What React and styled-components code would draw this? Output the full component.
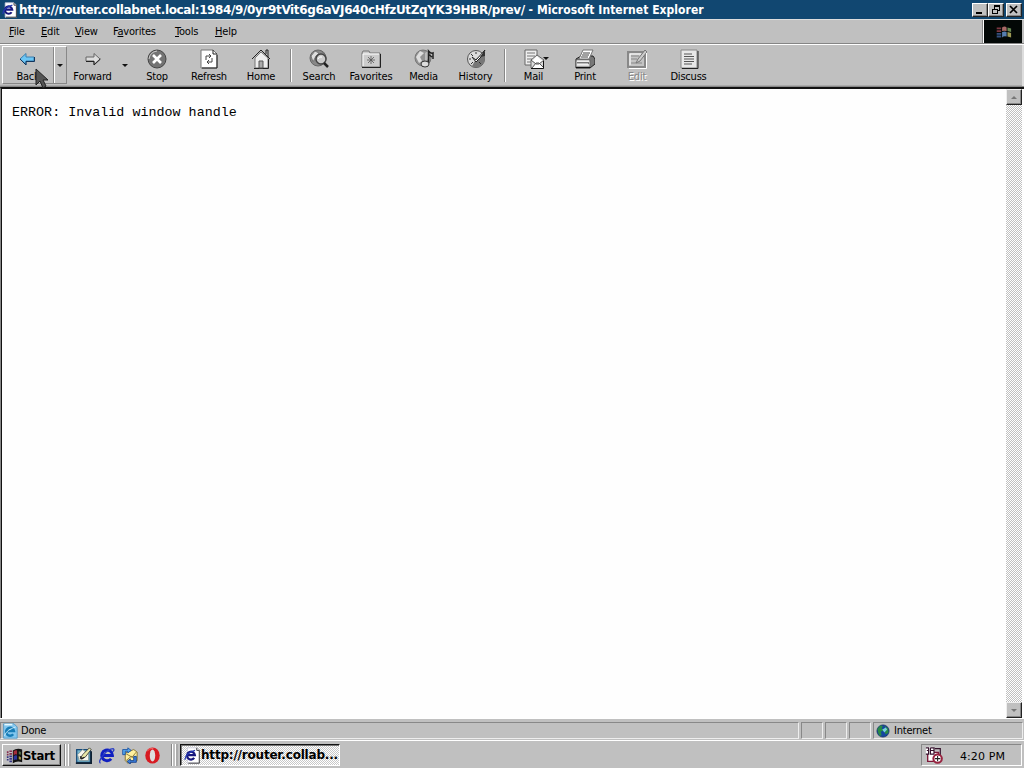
import styled, { createGlobalStyle } from "styled-components";

const GlobalStyle = createGlobalStyle`
  * { box-sizing: border-box; }
  body { margin: 0; overflow: hidden; background: #c0c0c0; }
`;

const tools = [
  { label: "Stop", icon: "stop", width: 50 },
  { label: "Refresh", icon: "refresh", width: 54 },
  { label: "Home", icon: "home", width: 50 },
];

const searchTools = [
  { label: "Search", icon: "search", width: 52 },
  { label: "Favorites", icon: "favorites", width: 52 },
  { label: "Media", icon: "media", width: 53 },
  { label: "History", icon: "history", width: 51 },
];

const pageTools = [
  { label: "Print", icon: "print", width: 52 },
  { label: "Edit", icon: "edit", width: 52, disabled: true },
  { label: "Discuss", icon: "discuss", width: 51 },
];

const menus = [
  ["F", "ile", "", 32],
  ["E", "dit", "", 34],
  ["V", "iew", "", 38],
  ["a", "vorites", "F", 62],
  ["T", "ools", "", 40],
  ["H", "elp", "", 36],
];

const art = {
  back: (
    <>
      <path d="M2 10L8 4.5V8H16V12H8V15.5Z" fill="#6cc6f4" stroke="#3d7fae" />
      <path d="M2 10L8 16V12.5H16.5V8" fill="none" stroke="#12365e" />
    </>
  ),
  forward: (
    <>
      <path d="M17 10L11 4.5V8H3V12H11V15.5Z" fill="#ddd" stroke="#666" />
      <path d="M3 12.5H11V16L17.5 10" fill="none" stroke="#222" />
    </>
  ),
  stop: (
    <>
      <circle cx="10" cy="10" r="9" fill="#737373" stroke="#444" />
      <path d="M2 10Q3 3 10 2" stroke="#ccc" fill="none" />
      <path d="M6 6L14 14M14 6L6 14" stroke="#fff" strokeWidth="2.6" />
    </>
  ),
  refresh: (
    <>
      <path d="M2 1H14L18 5V19H2Z" fill="#fff" stroke="#777" />
      <path d="M14 1V5H18M18 6V19H3" fill="none" stroke="#222" />
      <path d="M7 11V7H12M10 5L12 7L10 9M13 9V13H8M10 11L8 13L10 15" fill="none" stroke="#444" />
    </>
  ),
  home: (
    <>
      <path d="M4 9V19H17V9L10 3Z" fill="#eee" stroke="#777" />
      <path d="M1 10L10 1L19 10M15 5V1H17V8M17.5 10V19.5H3" fill="none" stroke="#222" />
      <path d="M8 12H12V19H8Z" fill="#aaa" stroke="#555" />
    </>
  ),
  search: (
    <>
      <circle cx="9" cy="9" r="8" fill="#888" stroke="#666" />
      <path d="M2 7L6 2L10 4L7 7L4 13ZM12 2L16 6" fill="#ddd" stroke="#777" />
      <circle cx="12" cy="10" r="5" fill="#ccc" stroke="#444" strokeWidth="1.5" />
      <path d="M9 10Q10 7 13 8" fill="none" stroke="#fff" />
      <path d="M15 14L19 18" stroke="#222" strokeWidth="2.5" />
    </>
  ),
  favorites: (
    <>
      <path d="M1 4L2 2H8L9 4H19V18H1Z" fill="#ccc" stroke="#777" />
      <path d="M2 17V5H18" fill="none" stroke="#fff" />
      <path d="M19.5 5V18.5H1" fill="none" stroke="#222" />
      <path d="M10 7V15M6 11H14M7 8L13 14M13 8L7 14" stroke="#555" strokeWidth=".8" />
    </>
  ),
  media: (
    <>
      <circle cx="9" cy="9" r="8" fill="#929292" stroke="#777" />
      <path d="M2 8L6 2L10 4L6 8L8 12L5 14Z" fill="#ddd" />
      <path d="M11 4L14 2V10L11 13Z" fill="#bbb" />
      <path d="M14.5 14V2Q17 5 19 4V10M14 5L18 8" fill="none" stroke="#222" strokeWidth="1.5" />
      <ellipse cx="11" cy="15" rx="4" ry="3" fill="#ddd" stroke="#333" />
    </>
  ),
  history: (
    <>
      <circle cx="10" cy="10" r="8.5" fill="#ddd" stroke="#555" />
      <path d="M10 10L18 4Q21 11 15 17Q10 20 6 17Z" fill="#777" />
      <path d="M3 10H5M10 3V5M5 5L7 7M5 15L7 13M15 15L13 13" stroke="#333" />
      <path d="M6 8L10 11L19 1L15 8L10 13Z" fill="#fff" stroke="#222" />
      <path d="M14 8L19 2V7Z" fill="#333" />
    </>
  ),
  mail: (
    <>
      <path d="M1 1H13V16H1Z" fill="#eee" stroke="#666" />
      <path d="M3 4H11M3 7H11M3 10H8M3 13H7" stroke="#777" />
      <path d="M7 11L13 6L20 11V19H7Z" fill="#ddd" stroke="#666" />
      <path d="M9 11L13 7L17 11L15 14H11Z" fill="#fff" />
      <path d="M8 19L12 14H15L20 19M7 11L12 15H15L20 11" fill="#fff" stroke="#555" />
      <path d="M19.5 12V19.5H7" fill="none" stroke="#111" />
    </>
  ),
  print: (
    <>
      <path d="M1 10L6 7H18L20 10V15L15 19H1Z" fill="#777" stroke="#222" />
      <path d="M4 10L8 1H18L14 10Z" fill="#fff" stroke="#777" />
      <path d="M8 4H15M7 6H14M6 8H13" stroke="#444" />
      <path d="M1 11H15V18H1Z" fill="#ddd" stroke="#666" />
      <path d="M2 14H14M1 18.5H15" stroke="#111" />
      <path d="M2 15H13M2 12H14" stroke="#fff" />
    </>
  ),
  edit: (
    <>
      <path d="M1 3H18V18H1Z" fill="#c4c4c4" stroke="#888" strokeWidth="2" />
      <path d="M4 7H12M4 10H10M4 14H15" stroke="#888" />
      <path d="M9 14L11 10L18 1L20 3L13 12Z" fill="#ccc" stroke="#777" />
      <path d="M2 19.5H19.5V4M3 16V5H14" fill="none" stroke="#fff" />
    </>
  ),
  discuss: (
    <>
      <path d="M2 1H18V19H2Z" fill="#e8e8e8" stroke="#888" />
      <path d="M19 2V19.5H3" fill="none" stroke="#222" />
      <path d="M5 5H13M5 7.5H15M5 10H15M5 12.5H15M5 15H13" stroke="#555" />
    </>
  ),
  ie: (
    <>
      <path d="M4 1H15L18 4V19H4Z" fill="#fff" stroke="#ccd" />
      <path d="M15 1V4H18V19H5" fill="none" stroke="#222" />
      <path d="M12 12.8A4.6 4.6 0 1 1 12.8 9.5H5" fill="none" stroke="#17177d" strokeWidth="2.6" />
      <path d="M1 15Q2 7 13 4" fill="none" stroke="#2338b0" strokeWidth="1.5" />
    </>
  ),
  browser: (
    <>
      <path d="M15.5 14A6.3 6.3 0 1 1 17 10H5" fill="none" stroke="#101fc0" strokeWidth="3.5" />
      <path d="M3 19Q0 18 5 11Q12 2 18 2Q20 3 17 6" fill="none" stroke="#263ac4" strokeWidth="1.5" />
    </>
  ),
  page: (
    <>
      <path d="M2 1H15L19 5V19H2Z" fill="#83c7ef" stroke="#4a91be" />
      <path d="M3 2H13" stroke="#e6faff" strokeWidth="2" />
      <path d="M14 14A5 5 0 1 1 15 10H6" fill="none" stroke="#187db7" strokeWidth="3" />
      <path d="M3 16Q6 8 17 5" fill="none" stroke="#e2f7ff" />
    </>
  ),
  windows: (
    <>
      <path d="M8 4Q13 1 19 3V18Q13 16 8 19Z" fill="#111" />
      <path d="M9 5Q11 3.5 13 4V9Q11 8 9 10Z" fill="#a42c3b" />
      <path d="M15 5Q16 5 17.5 6V9Q16 8.5 15 8.5Z" fill="#51724b" />
      <path d="M9 11Q11 9 13 10V15Q11 14 9 16Z" fill="#2b369d" />
      <path d="M15 11Q16 11 17.5 12V15Q16 14.5 15 14.5Z" fill="#aa9940" />
      <path d="M1 6H3M4 5H7M1 9H3M4 8H7" stroke="#85304f" strokeWidth="2" />
      <path d="M1 12H3M4 11H7M1 15H3M4 14H7M4 17H7" stroke="#353484" strokeWidth="2" />
    </>
  ),
  desktop: (
    <>
      <path d="M2 3H18V18H2Z" fill="#79b8d1" stroke="#174b79" strokeWidth="1.5" />
      <path d="M1 19H19V5" fill="none" stroke="#123" strokeWidth="2" />
      <path d="M3 9L9 3L16 8V16H5Z" fill="#f8f8ef" stroke="#829597" />
      <path d="M6 14L9 9L17 1L19 3L12 12Z" fill="#e9e8a8" stroke="#333" />
      <path d="M6 11L8 14L11 12" fill="none" stroke="#222" strokeWidth="1.5" />
    </>
  ),
  outlook: (
    <>
      <path d="M5 7L15 3L19 6V16L8 19L5 16Z" fill="#fff09e" stroke="#7c6725" />
      <path d="M6 8L13 12L18 6M6 16L12 11L18 15" fill="none" stroke="#806f33" />
      <path d="M2 9V3H8V1L12 4L8 7V5H5V9Z" fill="#56a9ee" stroke="#164fa2" />
      <path d="M18 11V18H11V20L7 17L11 14V16H15V11Z" fill="#3e80da" stroke="#123d8d" />
    </>
  ),
  opera: (
    <>
      <ellipse cx="10" cy="10" rx="8.5" ry="9.5" fill="#d71b22" />
      <ellipse cx="10" cy="10" rx="3.2" ry="7.2" fill="#ddd" />
      <path d="M4 5Q6 1 11 2" fill="none" stroke="#ff7777" />
    </>
  ),
  globe: (
    <>
      <circle cx="10" cy="10" r="8.7" fill="#1546a0" stroke="#0c265a" />
      <path d="M2 7L6 2L10 3L8 6L11 9L7 11L8 16L5 17L3 12ZM12 3L17 6L18 12L14 15L12 11L15 9Z" fill="#288b46" />
      <path d="M9 8L14 5L16 8L12 12Z" fill="#78cfe0" />
    </>
  ),
  tray: (
    <>
      <path d="M3 7H15V17H3Z" fill="#fff" stroke="#7c1738" strokeWidth="1.5" />
      <path d="M1 1H10V9H1Z" fill="#fff" />
      <path d="M1 2H4V5H2M4 5V9H1M6 2H10V9H6V2M6 5H10M11 3H17V10" fill="none" stroke="#35112c" strokeWidth="1.3" />
      <circle cx="14" cy="14" r="4.7" fill="#fff" stroke="#982440" strokeWidth="2.3" />
      <path d="M14 11V14H17M11 14H14V17" fill="none" stroke="#222" strokeWidth="1.2" />
    </>
  ),
};

function Icon({ name, size = 20 }) {
  return (
    <Drawing width={size} height={size} viewBox="0 0 20 20">
      {art[name]}
    </Drawing>
  );
}

function ToolButton({ item }) {
  return (
    <Tool $width={item.width} $disabled={item.disabled}>
      <Icon name={item.icon} />
      <Caption>{item.label}</Caption>
    </Tool>
  );
}

export default function App() {
  return (
    <Screen>
      <GlobalStyle />
      <TitleBar>
        <Icon name="ie" size={16} />
        <Title>
          <Address>http://router.collabnet.local:1984/9/0yr9tVit6g6aVJ640cHfzUtZqYK39HBR/prev/</Address>
          {" - Microsoft Internet Explorer"}
        </Title>
        <WindowButtons>
          <WindowButton><svg width="10" height="10"><path d="M1 8H7" stroke="#000" strokeWidth="2" /></svg></WindowButton>
          <WindowButton><svg width="10" height="10" shapeRendering="crispEdges"><path d="M3.5 3.5V.5H8.5V5.5H6.5M3 1.5H9M1.5 4.5H6.5V8.5H1.5ZM1 4.5H7" fill="none" stroke="#000" /></svg></WindowButton>
          <WindowButton $gap><svg width="10" height="10"><path d="M1 1L8 8M8 1L1 8" stroke="#000" strokeWidth="1.7" /></svg></WindowButton>
        </WindowButtons>
      </TitleBar>
      <MenuBar>
        {menus.map(([key, after, before, width]) => (
          <Menu key={key} $width={width}>{before}<u>{key}</u>{after}</Menu>
        ))}
        <Throbber>
          <svg width="18" height="18" viewBox="0 0 20 20">
            <path d="M9 5Q12 3 14 5V9Q11 8 9 9Z" fill="#a76966" />
            <path d="M15 5L19 6V10L15 9Z" fill="#688954" />
            <path d="M9 10Q12 9 14 10V15Q11 14 9 16Z" fill="#567dae" />
            <path d="M15 10L19 11V16L15 15Z" fill="#9d9954" />
            <path d="M3 6H8M3 9H8" stroke="#7b3640" strokeWidth="2" />
            <path d="M3 12H8M3 15H8" stroke="#355080" strokeWidth="2" />
          </svg>
        </Throbber>
      </MenuBar>
      <ToolBar>
        <BackButton>
          <BackMain><Icon name="back" /><Caption>Back</Caption></BackMain>
          <DropMark><Arrow /></DropMark>
          <Cursor width="14" height="22" viewBox="0 0 14 22">
            <path d="M1 1V17L5 13L8 20L11 18L8 12H13Z" fill="#555" stroke="#222" />
          </Cursor>
        </BackButton>
        <ToolButton item={{ label: "Forward", icon: "forward", width: 51 }} />
        <ForwardMark><Arrow /></ForwardMark>
        {tools.map((item) => <ToolButton key={item.label} item={item} />)}
        <Divider $wide />
        {searchTools.map((item) => <ToolButton key={item.label} item={item} />)}
        <Divider />
        <MailButton>
          <Icon name="mail" />
          <Caption>Mail</Caption>
          <MailArrow><Arrow /></MailArrow>
        </MailButton>
        {pageTools.map((item) => <ToolButton key={item.label} item={item} />)}
      </ToolBar>
      <Viewport>
        <Page>ERROR: Invalid window handle</Page>
        <ScrollBar>
          <ScrollButton><Arrow $up /></ScrollButton>
          <ScrollButton><Arrow /></ScrollButton>
        </ScrollBar>
      </Viewport>
      <StatusBar>
        <StatusMain><Icon name="page" size={16} />Done</StatusMain>
        <StatusCell /><StatusCell /><StatusCell />
        <Zone><Icon name="globe" size={14} />Internet</Zone>
      </StatusBar>
      <TaskBar>
        <StartButton><Icon name="windows" size={17} /><span>Start</span></StartButton>
        <Grip />
        <QuickLaunch>
          <Icon name="desktop" size={17} />
          <Icon name="browser" size={17} />
          <Icon name="outlook" size={17} />
          <Icon name="opera" size={17} />
        </QuickLaunch>
        <Grip />
        <TaskButton><Icon name="ie" size={17} /><span>http://router.collab...</span></TaskButton>
        <Tray><Icon name="tray" size={18} /><Clock>4:20 PM</Clock></Tray>
      </TaskBar>
    </Screen>
  );
}

const Screen = styled.div`
  width: 1024px;
  height: 768px;
  display: flex;
  flex-direction: column;
  overflow: hidden;
  background: #c0c0c0;
  color: #000;
  font: 11px "DejaVu Sans Condensed", "DejaVu Sans", sans-serif;
  font-stretch: condensed;
  letter-spacing: -0.2px;
`;

const Drawing = styled.svg`
  display: block;
  flex-shrink: 0;
`;

const TitleBar = styled.header`
  height: 19px;
  flex-shrink: 0;
  display: flex;
  align-items: center;
  padding: 0 2px;
  background: #114771;
  color: #fff;
`;

const Title = styled.div`
  margin-left: 1px;
  font-weight: bold;
  font-size: 12px;
  letter-spacing: 0.04px;
  white-space: pre;
`;

const Address = styled.span`
  font-family: "DejaVu Sans", sans-serif;
  font-stretch: normal;
  letter-spacing: -0.37px;
`;

const WindowButtons = styled.div`
  display: flex;
  margin-left: auto;
`;

const WindowButton = styled.div`
  width: 16px;
  height: 14px;
  margin-left: ${({ $gap }) => ($gap ? 2 : 0)}px;
  display: grid;
  place-items: center;
  background: #c0c0c0;
  border: 1px solid #fff;
  border-right-color: #222;
  border-bottom-color: #222;
  box-shadow: inset -1px -1px #888;
`;

const MenuBar = styled.nav`
  height: 25px;
  flex-shrink: 0;
  display: flex;
  align-items: center;
  padding-left: 9px;
  border-top: 1px solid #ddd;
  border-bottom: 1px solid #858585;
`;

const Menu = styled.div`
  width: ${({ $width }) => $width}px;
  margin-top: -1px;
  white-space: nowrap;

  u { text-underline-offset: 1px; text-decoration-thickness: 1px; }
`;

const Throbber = styled.div`
  width: 39px;
  height: 23px;
  margin-left: auto;
  margin-right: 2px;
  display: grid;
  place-items: center;
  background: #030806;
  border-left: 1px solid #fff;
  box-shadow: -1px 0 #888;
`;

const ToolBar = styled.div`
  height: 43px;
  flex-shrink: 0;
  display: flex;
  padding: 1px 2px 2px;
  border-top: 1px solid #fff;
  border-bottom: 1px solid #888;
  box-shadow: inset -2px 0 #ddd, inset 0 -1px #aaa;
`;

const BackButton = styled.div`
  position: relative;
  width: 65px;
  display: flex;
  border: 1px solid #fff;
  border-right-color: #888;
  border-bottom-color: #888;
`;

const BackMain = styled.div`
  width: 51px;
  display: flex;
  flex-direction: column;
  align-items: center;
  padding-top: 2px;
  border-right: 1px solid #888;
  box-shadow: 1px 0 #fff;
`;

const DropMark = styled.div`
  flex: 1;
  display: grid;
  place-items: center;
`;

const ForwardMark = styled.div`
  width: 14px;
  display: grid;
  place-items: center;
`;

const Cursor = styled.svg`
  position: absolute;
  left: 32px;
  top: 21px;
  z-index: 1;
`;

const Tool = styled.div`
  width: ${({ $width }) => $width}px;
  padding-top: 3px;
  display: flex;
  flex-direction: column;
  align-items: center;
  color: ${({ $disabled }) => ($disabled ? "#888" : "#000")};
  text-shadow: ${({ $disabled }) => ($disabled ? "1px 1px #fff" : "none")};
`;

const Caption = styled.span`
  height: 15px;
  line-height: 15px;
  white-space: nowrap;
`;

const Arrow = styled.i`
  width: 0;
  height: 0;
  border: 3px solid transparent;
  border-top-color: ${({ $up }) => ($up ? "transparent" : "#111")};
  border-bottom-color: ${({ $up }) => ($up ? "#777" : "transparent")};
  border-top-width: ${({ $up }) => ($up ? 0 : 3)}px;
  border-bottom-width: ${({ $up }) => ($up ? 3 : 0)}px;
`;

const Divider = styled.div`
  width: 2px;
  margin: 3px ${({ $wide }) => ($wide ? 1 : 2)}px 2px ${({ $wide }) => ($wide ? 4 : 3)}px;
  border-left: 1px solid #888;
  border-right: 1px solid #fff;
`;

const MailButton = styled(Tool)`
  position: relative;
  width: 51px;
`;

const MailArrow = styled.span`
  position: absolute;
  display: block;
  line-height: 0;
  top: 11px;
  right: 10px;

  ${Arrow} { display: block; }
`;

const Viewport = styled.main`
  height: 631px;
  flex-shrink: 0;
  display: flex;
  border-left: 1px solid #888;
  border-top: 2px solid #111;
  box-shadow: inset 1px 0 #111;
  background: #fefefe;
`;

const Page = styled.pre`
  flex: 1;
  margin: 0;
  padding: 17px 11px;
  font: 13.35px/14px "Liberation Mono", monospace;
  letter-spacing: 0.02px;
`;

const ScrollBar = styled.div`
  width: 16px;
  margin-right: 2px;
  display: flex;
  flex-direction: column;
  justify-content: space-between;
  background: repeating-conic-gradient(#fff 0 25%, #c0c0c0 0 50%) 0 0 / 2px 2px;
`;

const ScrollButton = styled.div`
  height: 16px;
  display: grid;
  place-items: center;
  background: #c0c0c0;
  border: 1px solid #eee;
  border-right-color: #222;
  border-bottom-color: #222;
  box-shadow: inset -1px -1px #888;

  ${Arrow} {
    border-top-color: #777;
  }
`;

const StatusBar = styled.footer`
  height: 22px;
  flex-shrink: 0;
  display: flex;
  gap: 2px;
  padding: 3px 1px 1px 0;
  border-top: 1px solid #fff;
`;

const StatusCell = styled.div`
  width: 22px;
  border: 1px solid #888;
  border-right-color: #eee;
  border-bottom-color: #eee;
`;

const StatusMain = styled(StatusCell)`
  width: 799px;
  display: flex;
  align-items: center;
  gap: 3px;
  padding-left: 1px;
`;

const Zone = styled(StatusMain)`
  width: auto;
  flex: 1;
  gap: 4px;
  padding-left: 2px;
`;

const TaskBar = styled.footer`
  height: 28px;
  flex-shrink: 0;
  display: flex;
  align-items: center;
  padding: 2px 2px 1px;
  border-top: 1px solid #fff;
`;

const StartButton = styled.div`
  width: 59px;
  height: 22px;
  display: flex;
  align-items: center;
  padding-left: 3px;
  border: 1px solid #fff;
  border-right-color: #111;
  border-bottom-color: #111;
  box-shadow: inset -1px -1px #888;
  font-weight: bold;
  font-size: 13px;
  letter-spacing: -0.3px;
`;

const Grip = styled.div`
  width: 7px;
  height: 22px;
  margin: 0 2px 0 3px;
  border-left: 1px solid #888;
  border-right: 2px solid #aaa;
  box-shadow: inset 1px 0 #fff, inset -1px 0 #fff;
`;

const QuickLaunch = styled.div`
  width: 95px;
  display: flex;
  align-items: center;
  gap: 6px;
  padding-left: 2px;
`;

const TaskButton = styled.div`
  width: 160px;
  height: 22px;
  display: flex;
  align-items: center;
  padding-left: 3px;
  border: 1px solid #111;
  border-right-color: #fff;
  border-bottom-color: #fff;
  box-shadow: inset 1px 1px #777;
  background: repeating-conic-gradient(#fff 0 25%, #c8c8c8 0 50%) 0 0 / 2px 2px;
  font-family: "DejaVu Sans", sans-serif;
  font-stretch: normal;
  font-weight: bold;
  font-size: 12px;
  letter-spacing: -0.2px;
  white-space: nowrap;
`;

const Tray = styled.div`
  width: 101px;
  height: 22px;
  margin-left: auto;
  display: flex;
  align-items: center;
  justify-content: space-between;
  padding: 0 16px 0 3px;
  border: 1px solid #888;
  border-right-color: #fff;
  border-bottom-color: #fff;
`;

const Clock = styled.span`
  margin-top: 2px;
  font-family: "DejaVu Sans", sans-serif;
  font-stretch: normal;
  letter-spacing: 0.1px;
`;
